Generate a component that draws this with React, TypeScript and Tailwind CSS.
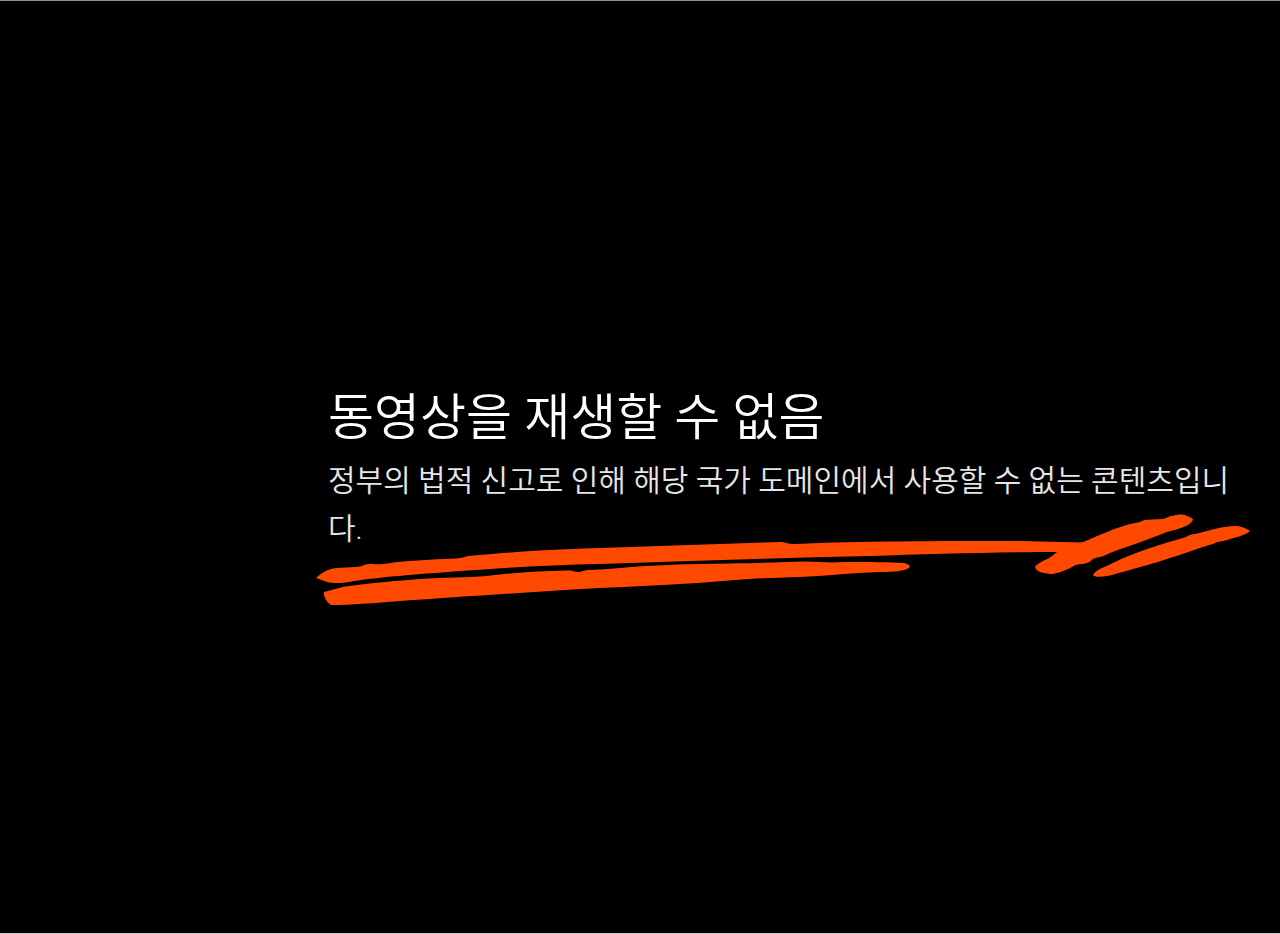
function Scribble() {
  return (
    <svg
      className="absolute -left-4 top-[129px] h-[104px] w-[944px] max-w-none"
      viewBox="312 508 944 104"
      fill="#ff4800"
      aria-hidden="true"
    >
      {/* long upper stroke */}
      <path d="M316 578 C321 573 328 569 336 568 L355 567 C363 567 366 563 372 564 C384 565 388 563 398 562 C420 560 440 559 456 558.500 C462 558 464 557 469 556 C510 552 560 549 600 548 C660 546 720 544 780 542 C786 542 786 544 795 544 C860 541 940 541 1020 541 L1083 542.500 L1060 552 C1000 552 930 554 870 556 C780 558 690 561 600 564 C550 565 500 568 460 571 C420 574 380 577 355 581 C345 583 335 584 327 582 Z" />
      {/* shorter lower stroke */}
      <path d="M324 592 C333 590 340 587 349 586 C370 583 395 581 420 579 C445 577 465 578 487 576 C510 573 540 571 567 570.500 C573 570 574 572 578 572 C582 572 584 570 590 570 C605 569 612 569 620 568 C650 565 690 564 730 563.500 C760 563 785 562 805 561.500 C820 562 830 563 845 562 C870 562 890 562 904 563 C909 564 911 566 909 568 C904 571 895 572 880 572 C850 573 825 576 800 577 C775 578 755 578 735 580 C690 584 645 586 600 588 C530 592 460 597 400 601 C375 603 350 605 331 605 C327 603 323 596 324 592 Z" />
      {/* arrow tips */}
      <path d="M1035 567 C1038 562 1045 561 1052 556 C1056 553 1059 550 1065 547 L1083 542 C1100 535 1115 528 1130 524 L1140 522 C1145 519 1146 520 1151 519.500 L1163 519 C1168 518 1168 516 1172 516 C1179 514 1184 514 1187 516 C1191 517 1193 519 1193 520 C1190 525 1184 527 1178 529 C1171 531 1168 531 1162 534 C1145 541 1125 547 1110 553 C1103 557 1098 557 1093 559 C1090 561 1091 562 1087 563 C1081 565 1078 563 1072 567 C1064 571 1058 573 1053 574 C1045 574 1036 572 1035 567 Z" />
      <path d="M1093 575 C1095 570 1105 567 1115 562 C1135 552 1165 543 1186 537 C1190 534 1195 534 1200 533 C1210 530 1223 526 1235 526 C1241 526 1246 528 1250 531 C1246 535 1237 537 1230 539 C1225 541 1221 541 1217 542 C1212 545 1208 545 1200 548 C1175 557 1145 566 1115 574 C1107 577 1094 578 1093 575 Z" />
    </svg>
  );
}

function App() {
  return (
    <main
      lang="ko"
      className="flex min-h-screen flex-col justify-center border-t border-b border-t-[#8f8f8f] border-b-[#c4c4c4] bg-black pr-10 pb-0.5 pl-[328px] font-[Roboto,'Noto_Sans_CJK_KR',sans-serif]"
    >
      <div className="relative">
        <h1 className="text-[50px] leading-[78px] font-[350] text-white">
          동영상을 재생할 수 없음
        </h1>
        <p className="text-[30px] leading-[48px] font-[350] text-[#e6e6e6]">
          정부의 법적 신고로 인해 해당 국가 도메인에서 사용할 수 없는
          콘텐츠입니다.
        </p>
        <Scribble />
      </div>
    </main>
  );
}

export default App;
